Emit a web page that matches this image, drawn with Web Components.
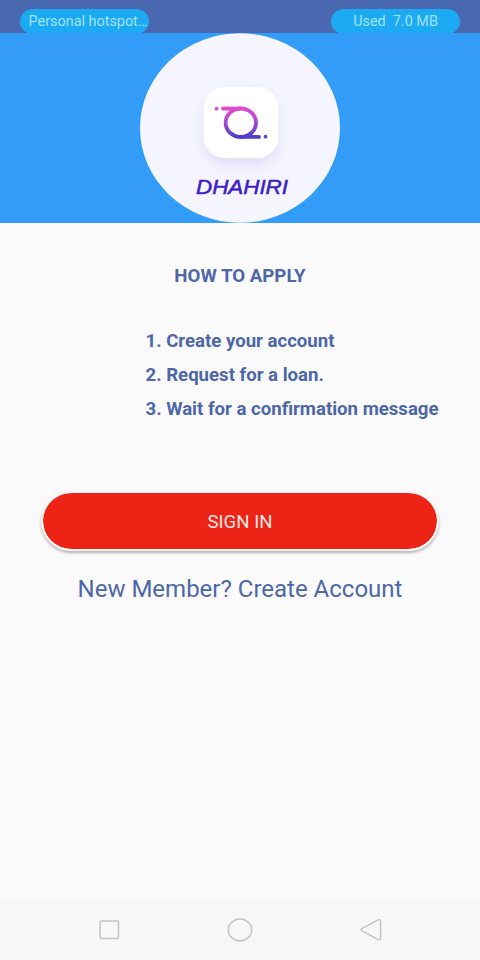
<!DOCTYPE html>
<html lang="en">
<head>
<meta charset="utf-8">
<meta name="viewport" content="width=device-width, initial-scale=1">
<title>Dhahiri</title>
<style>
    body {
        margin: 0;
        background: #fafafa;
        font-family: Roboto, "Liberation Sans", sans-serif;
    }
</style>
</head>
<body>
<dhahiri-app></dhahiri-app>

<script>
class StatusPill extends HTMLElement {
    constructor() {
        super();
        this.attachShadow({ mode: 'open' });
    }

    connectedCallback() {
        this.shadowRoot.innerHTML = `
            <style>
                :host {
                    box-sizing: border-box;
                    display: block;
                    width: 129px;
                    height: 25px;
                    border-radius: 12.5px;
                    background: #1caaf3;
                    color: #a0e2fb;
                    font-size: 14.4px;
                    line-height: 25px;
                    text-align: center;
                    white-space: nowrap;
                }

                /* keeps the double space in the usage label */
                slot {
                    white-space: pre;
                }
            </style>
            <slot></slot>
        `;
    }
}

class StatusBar extends HTMLElement {
    constructor() {
        super();
        this.attachShadow({ mode: 'open' });
    }

    connectedCallback() {
        this.shadowRoot.innerHTML = `
            <style>
                :host {
                    box-sizing: border-box;
                    display: flex;
                    justify-content: space-between;
                    height: 33px;
                    padding: 9px 20px 0;
                    background: #4a68b0;
                    overflow: hidden;
                }

                .hotspot {
                    padding-left: 7px;
                }
            </style>
            <status-pill class="hotspot">Personal hotspot…</status-pill>
            <status-pill>Used  7.0 MB</status-pill>
        `;
    }
}

class BrandHeader extends HTMLElement {
    constructor() {
        super();
        this.attachShadow({ mode: 'open' });
    }

    connectedCallback() {
        this.shadowRoot.innerHTML = `
            <style>
                :host {
                    display: flex;
                    justify-content: center;
                    height: 190px;
                    background: #339cf8;
                }

                svg {
                    display: block;
                }

                text {
                    font: italic 20.5px "Liberation Sans", sans-serif;
                }
            </style>
            <svg width="200" height="190" viewBox="0 0 200 190">
                <defs>
                    <linearGradient id="ring" gradientUnits="userSpaceOnUse" x1="0" y1="73" x2="0" y2="106">
                        <stop offset="0" stop-color="#ea48d0"/>
                        <stop offset=".35" stop-color="#c04bcf"/>
                        <stop offset="1" stop-color="#463bcb"/>
                    </linearGradient>
                    <filter id="soft" x="-40%" y="-40%" width="180%" height="180%">
                        <feGaussianBlur stdDeviation="7"/>
                    </filter>
                </defs>
                <ellipse cx="100" cy="95" rx="100" ry="94.7" fill="#f4f5fe"/>
                <rect x="66" y="62" width="70" height="68" rx="20" fill="#d4ccf8" opacity=".75" filter="url(#soft)"/>
                <rect x="63.5" y="54" width="75" height="71" rx="21" fill="#fff"/>
                <g fill="none" stroke="url(#ring)" stroke-width="3.8" stroke-linecap="round">
                    <ellipse cx="100.8" cy="89.7" rx="15.2" ry="14.2"/>
                    <path d="M83 75.5 L101 75.6"/>
                    <path d="M101 103.8 L119 103.9"/>
                </g>
                <circle cx="76.6" cy="75.7" r="1.9" fill="#d64fca"/>
                <circle cx="125.5" cy="103.7" r="1.9" fill="#5b45c8"/>
                <text x="56" y="161.3" textLength="92" lengthAdjust="spacingAndGlyphs" fill="#3c20c8" stroke="#3c20c8" stroke-width=".5">DHAHIRI</text>
            </svg>
        `;
    }
}

class ApplySteps extends HTMLElement {
    constructor() {
        super();
        this.attachShadow({ mode: 'open' });
    }

    connectedCallback() {
        this.shadowRoot.innerHTML = `
            <style>
                :host {
                    display: block;
                    color: #4d67a8;
                    font-size: 18.6px;
                    font-weight: 700;
                }

                h1 {
                    margin: 0;
                    padding-top: 42px;
                    font-size: 18.7px;
                    line-height: 22px;
                    text-align: center;
                }

                .steps {
                    margin-top: 37px;
                    padding-left: 145.5px;
                    line-height: 34px;
                    white-space: nowrap;
                }
            </style>
            <h1>HOW TO APPLY</h1>
            <div class="steps">
                <div>1. Create your account</div>
                <div>2. Request for a loan.</div>
                <div>3. Wait for a confirmation message</div>
            </div>
        `;
    }
}

class SignInButton extends HTMLElement {
    constructor() {
        super();
        this.attachShadow({ mode: 'open' });
    }

    connectedCallback() {
        this.shadowRoot.innerHTML = `
            <style>
                :host {
                    display: block;
                    margin: 65px 41px 0;
                }

                button {
                    display: block;
                    box-sizing: border-box;
                    width: 100%;
                    height: 60px;
                    padding: 2px 0 0;
                    border: 2px solid #fdf6f3;
                    border-radius: 30px;
                    background: #ec2315;
                    background-clip: padding-box;
                    box-shadow: 0 2px 3px rgba(0, 0, 0, 0.28);
                    color: #fbe6e2;
                    font: 18.6px Roboto, sans-serif;
                }
            </style>
            <button><slot></slot></button>
        `;
    }
}

class CreateLink extends HTMLElement {
    constructor() {
        super();
        this.attachShadow({ mode: 'open' });
    }

    connectedCallback() {
        this.shadowRoot.innerHTML = `
            <style>
                :host {
                    display: block;
                    margin-top: 23px;
                    color: #4d67a8;
                    font-size: 24px;
                    line-height: 30px;
                    text-align: center;
                    white-space: nowrap;
                }
            </style>
            <slot></slot>
        `;
    }
}

class NavBar extends HTMLElement {
    constructor() {
        super();
        this.attachShadow({ mode: 'open' });
    }

    connectedCallback() {
        this.shadowRoot.innerHTML = `
            <style>
                :host {
                    display: flex;
                    justify-content: space-between;
                    align-items: center;
                    box-sizing: border-box;
                    height: 61px;
                    padding: 0 95px;
                    background: #f7f7f7;
                }

                svg {
                    fill: none;
                    stroke: #c3c3c3;
                    stroke-width: 1.5;
                    stroke-linejoin: round;
                }
            </style>
            <svg width="28" height="28" viewBox="0 0 28 28"><rect x="5" y="5" width="18.5" height="17.6" rx="1.5"/></svg>
            <svg width="28" height="28" viewBox="0 0 28 28"><ellipse cx="14" cy="14" rx="11.6" ry="10.9"/></svg>
            <svg width="28" height="28" viewBox="0 0 28 28"><path d="M4.7 12.7 L21.2 3.9 Q23.6 3.2 23.6 5.4 V22 Q23.6 24.6 21.2 23.6 L4.7 14.7 Q3.2 13.7 4.7 12.7 Z"/></svg>
        `;
    }
}

class DhahiriApp extends HTMLElement {
    constructor() {
        super();
        this.attachShadow({ mode: 'open' });
    }

    connectedCallback() {
        this.shadowRoot.innerHTML = `
            <style>
                :host {
                    display: flex;
                    flex-direction: column;
                    height: 960px;
                    overflow: hidden;
                }

                nav-bar {
                    margin-top: auto;
                }
            </style>
            <status-bar></status-bar>
            <brand-header></brand-header>
            <apply-steps></apply-steps>
            <sign-in-button>SIGN IN</sign-in-button>
            <create-link>New Member? Create Account</create-link>
            <nav-bar></nav-bar>
        `;
    }
}

customElements.define('status-pill', StatusPill);
customElements.define('status-bar', StatusBar);
customElements.define('brand-header', BrandHeader);
customElements.define('apply-steps', ApplySteps);
customElements.define('sign-in-button', SignInButton);
customElements.define('create-link', CreateLink);
customElements.define('nav-bar', NavBar);
customElements.define('dhahiri-app', DhahiriApp);
</script>
</body>
</html>
